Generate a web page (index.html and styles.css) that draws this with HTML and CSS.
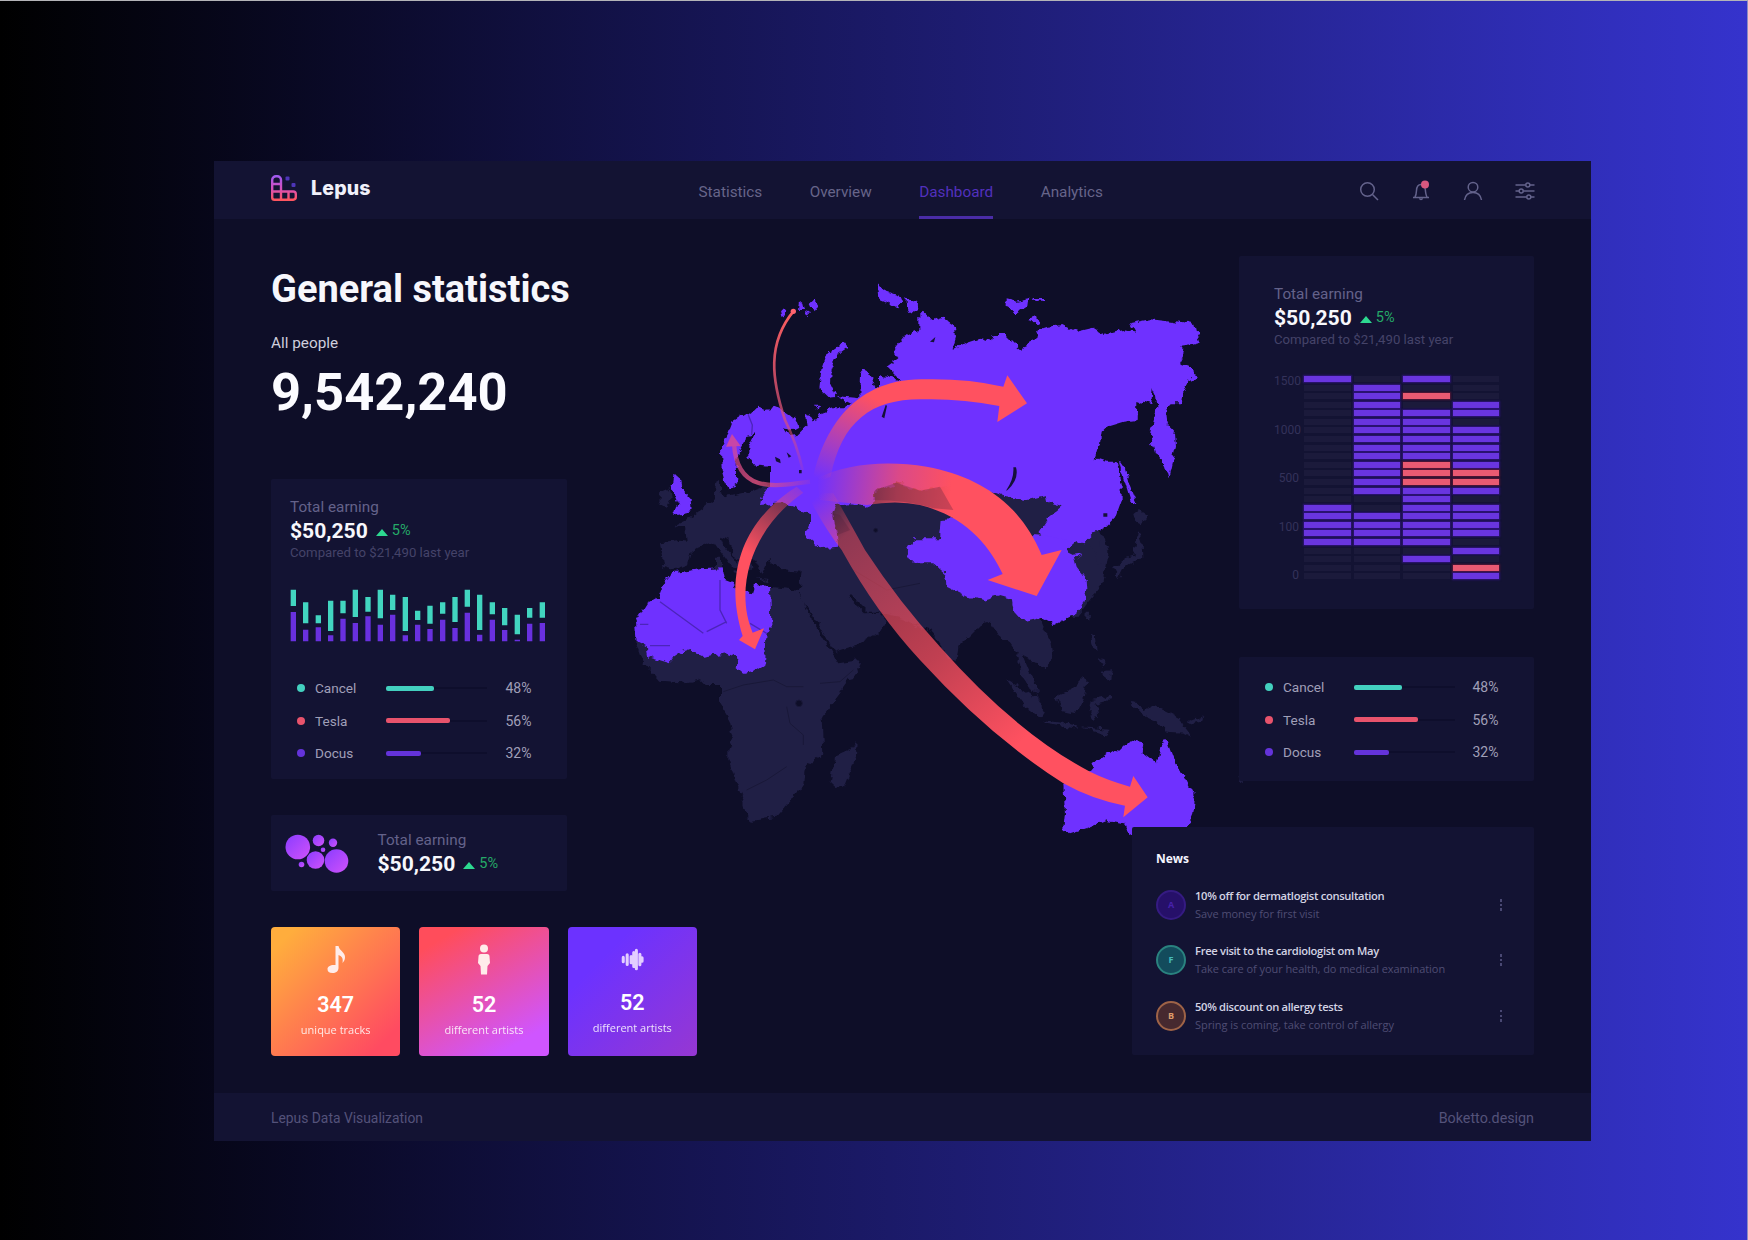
FILE: index.html
```html
<!DOCTYPE html>
<html lang="en">
<head>
<meta charset="utf-8">
<title>Lepus</title>
<link rel="stylesheet" href="styles.css">
</head>
<body>
<div class="window">
  <header class="topbar">
    <div class="brand">
      <svg class="logo" viewBox="0 0 26 26" fill="none">
        <defs><linearGradient id="lg" x1="0" y1="0" x2="0" y2="1"><stop offset="0" stop-color="#a05af0"/><stop offset=".5" stop-color="#d450c0"/><stop offset="1" stop-color="#ff5560"/></linearGradient></defs>
        <path stroke="url(#lg)" stroke-width="2.400" d="M1.2 22.500V5a3.800 3.800 0 0 1 3.800-3.800h1.200A3.800 3.800 0 0 1 10 5v11.500h12.200a2.600 2.600 0 0 1 2.600 2.600v3a2.600 2.600 0 0 1-2.600 2.600H3.500a2.300 2.300 0 0 1-2.300-2.300zM1.200 9H10M1.200 16.500H10v8M17.500 16.500v8"/>
        <rect x="14.500" y="1.500" width="4" height="4" rx="1" fill="#4d35b8"/><rect x="20.500" y="8" width="4" height="4" rx="1" fill="#4d35b8"/>
      </svg>
      <span class="brand-name">Lepus</span>
    </div>
    <nav class="nav"><a>Statistics</a><a>Overview</a><a class="active">Dashboard</a><a>Analytics</a></nav>
    <div class="tools">
      <svg viewBox="0 0 20 20"><circle cx="8.500" cy="8.500" r="6.800"/><path d="M13.500 13.500l5.500 5.500"/></svg>
      <svg viewBox="0 0 20 20"><path d="M2 16.500h16M4 16c1-1.500 1.300-3 1.500-6.500C5.700 5.500 7.500 3.500 10 3.500c1.500 0 3.800 1.500 4.300 5 .3 3.500.7 6 1.700 7.500M8.500 17.500a1.700 1.700 0 0 0 3 0"/><circle class="alert" cx="14" cy="3.500" r="4"/></svg>
      <svg viewBox="0 0 20 20"><circle cx="10" cy="6.200" r="4.800"/><path d="M1.500 19c.8-4.800 3.500-7.500 8.500-7.500s7.700 2.700 8.500 7.500"/></svg>
      <svg viewBox="0 0 20 20"><path d="M.5 4h10M15 4h4.500M.5 10H4M8.500 10h11M.5 16h11M16 16h3.500"/><circle cx="12.800" cy="4" r="2"/><circle cx="6.200" cy="10" r="2"/><circle cx="13.800" cy="16" r="2"/></svg>
    </div>
  </header>

  <main class="main">
    <svg class="map" viewBox="214 219 1377 874">
      <defs>
        <filter id="coast" x="-5%" y="-5%" width="110%" height="110%" color-interpolation-filters="sRGB"><feTurbulence type="fractalNoise" baseFrequency=".045" numOctaves="2" seed="4"/><feDisplacementMap in="SourceGraphic" scale="24" xChannelSelector="R" yChannelSelector="G"/></filter>
        <linearGradient id="g4" gradientUnits="userSpaceOnUse" x1="600" y1="630" x2="730" y2="370"><stop offset="0" stop-color="#ff5160" stop-opacity="0"/><stop offset="1" stop-color="#ff5160"/></linearGradient>
        <linearGradient id="g5" gradientUnits="userSpaceOnUse" x1="590" y1="650" x2="990" y2="690"><stop offset="0" stop-color="#ff5160" stop-opacity="0"/><stop offset=".6" stop-color="#ff5160" stop-opacity=".75"/><stop offset="1" stop-color="#ff5160"/></linearGradient>
        <linearGradient id="g6" gradientUnits="userSpaceOnUse" x1="590" y1="680" x2="1400" y2="1560"><stop offset="0" stop-color="#ff5160" stop-opacity="0"/><stop offset=".12" stop-color="#ff5160" stop-opacity=".5"/><stop offset=".5" stop-color="#ff5160" stop-opacity=".74"/><stop offset=".8" stop-color="#ff5160"/></linearGradient>
        <linearGradient id="g3" gradientUnits="userSpaceOnUse" x1="560" y1="640" x2="400" y2="860"><stop offset="0" stop-color="#ff5160" stop-opacity=".1"/><stop offset="1" stop-color="#ff5160"/></linearGradient>
        <linearGradient id="g2" gradientUnits="userSpaceOnUse" x1="570" y1="630" x2="330" y2="500"><stop offset="0" stop-color="#ff5160" stop-opacity=".1"/><stop offset=".5" stop-color="#e55280" stop-opacity=".8"/><stop offset="1" stop-color="#e04a90" stop-opacity=".6"/></linearGradient>
        <linearGradient id="g1" gradientUnits="userSpaceOnUse" x1="500" y1="600" x2="500" y2="120"><stop offset="0" stop-color="#ff5160" stop-opacity=".1"/><stop offset=".3" stop-color="#d85078" stop-opacity=".7"/><stop offset="1" stop-color="#ff6060"/></linearGradient>
      </defs>
      <g transform="translate(620 270) scale(.33333)">
        <g class="land" filter="url(#coast)">
          <!-- Europe and Asia -->
          <path d="M120 820L180 812 200 815 195 770 165 765 215 740 250 715 280 690 285 640 300 630 300 665 320 680 390 665 430 650 470 640 700 650 900 600 1400 640 1430 750 1465 850 1450 940 1370 1040 1260 1045 1275 1080 1295 1120 1300 1165 1270 1195 1250 1180 1210 1160 1230 1210 1260 1265 1240 1265 1205 1215 1195 1155 1170 1120 1140 1100 1110 1055 1080 1065 1015 1130 1010 1170 985 1165 930 1080 905 1075 860 1050 800 1035 775 1025 740 1025 690 975 685 985 735 1030 780 1028 800 1050 780 1085 720 1120 645 1145 600 1070 550 995 540 950 545 905 480 900 445 860 470 845 480 800 500 770 520 790 560 810 600 840 550 830 480 850 455 860 440 885 425 915 405 870 385 865 400 890 380 905 340 850 325 810 300 800 310 825 350 870 365 895 330 885 280 815 240 830 215 850 205 885 165 900 130 890Z"/>
          <path d="M125 665L150 655 155 680 140 710 118 705ZM285 860h18v35h-18ZM340 900l35 5-15 18ZM405 925l40 5v8Z"/>
          <!-- Africa -->
          <path d="M45 1115L65 1170 120 1235 180 1240 240 1225 260 1245 300 1245 300 1300 325 1340 340 1400 325 1440 325 1470 345 1530 365 1580 380 1645 400 1652 470 1640 515 1590 550 1540 555 1490 610 1450 605 1345 660 1270 715 1195 722 1170 655 1180 635 1150 560 1020 540 960 450 950 300 1000Z"/>
          <path d="M710 1410L708 1460 675 1545 650 1552 632 1535 645 1460 690 1440Z"/>
          <!-- South-east Asia and Oceania -->
          <path d="M1200 1150L1230 1210 1250 1260 1245 1275 1220 1230 1195 1170ZM1262 1300L1250 1275 1235 1240 1215 1230ZM1305 1280L1350 1260 1385 1225 1402 1235 1395 1280 1370 1330 1325 1320ZM1162 1230L1190 1245 1250 1285 1275 1330 1265 1345 1220 1315ZM1270 1350L1370 1366 1370 1376 1280 1362ZM1385 1372L1475 1380 1460 1396ZM1415 1290L1470 1278 1470 1288 1430 1298 1440 1345 1430 1335 1420 1350 1408 1330ZM1525 1295L1555 1300 1570 1320 1600 1305 1670 1340 1717 1402 1690 1388 1640 1385 1615 1355 1560 1330ZM1700 1357L1750 1338 1745 1352 1710 1362ZM1410 1095L1425 1100 1430 1140 1415 1130ZM1435 1160L1460 1175 1450 1190ZM1445 1205L1475 1200 1470 1230 1450 1215ZM1400 1025l10 0-2 30-10-5ZM1850 1517l18 14-4 6Z"/>
          <!-- Korea and Japan -->
          <path d="M1425 790L1445 840 1460 875 1435 885 1425 845 1405 810ZM1560 720L1585 740 1565 760 1545 755 1540 735ZM1555 780L1568 820 1570 860 1510 895 1495 925 1480 895 1510 870 1540 860 1548 820Z"/>
        </g>
        <g class="borders"><path d="M310 1265l60-20 90-15 40 20h50M500 1310l10 50 40 35v30M1110 740l60 40M600 1240l60-5 40-35M380 1560l60-30 60-40M700 900l100 60 100-20"/><circle cx="537" cy="1300" r="10"/><circle cx="767" cy="781" r="6"/></g>
        <g class="hot" filter="url(#coast)">
          <!-- Scandinavia and Russia -->
          <path d="M320 658L305 600 303 530 325 490 340 450 372 430 395 435 415 410 440 420 470 412 500 430 530 450 538 470 520 480 492 475 508 498 535 495 560 470 555 430 570 435 582 455 600 430 640 415 675 415 695 402 650 378 718 385 720 310 728 298 750 310 765 350 780 355 780 315 802 320 842 332 800 290 835 265 820 240 850 200 895 180 895 135 912 125 940 150 970 140 1005 165 1008 205 998 240 1030 220 1075 205 1110 215 1115 195 1155 195 1185 225 1205 242 1215 225 1260 205 1250 180 1280 170 1330 165 1370 185 1420 173 1455 195 1510 180 1545 188 1530 160 1590 148 1690 160 1700 152 1725 158 1732 190 1742 218 1715 225 1680 230 1695 250 1680 280 1710 290 1728 322 1705 335 1690 370 1685 400 1655 400 1635 420 1640 460 1665 490 1668 530 1655 580 1645 625 1635 590 1605 545 1592 500 1600 460 1612 410 1608 375 1598 355 1594 400 1570 392 1552 400 1550 450 1510 455 1460 470 1445 485 1440 520 1427 565 1460 575 1490 575 1505 640 1505 690 1485 745 1460 770 1420 790 1390 820 1360 815 1300 850 1255 790 1285 745 1325 712 1285 700 1280 675 1220 690 1150 680 1110 665 1000 650 900 660 830 640 765 665 765 700 740 710 690 700 650 705 640 735 650 790 655 830 600 835 555 795 570 760 570 730 520 710 490 700 420 705 425 680 450 650 450 590 400 585 385 565 385 530 405 490 385 495 358 540 350 580 352 640Z"/>
          <path d="M858 852L885 805 960 805 965 750 1100 740 1235 795 1300 800 1370 815 1342 840 1350 855 1385 850 1372 870 1388 850 1362 862 1370 890 1400 930 1402 960 1382 1015 1350 1040 1302 1065 1260 1045 1212 1055 1180 1020 1175 985 1140 975 1090 990 1040 980 980 950 975 910 940 880 900 880 870 872Z"/>
          <!-- Arctic islands, Sakhalin, Britain -->
          <path d="M770 40L795 60 840 75 850 100 830 112 800 95 775 85ZM860 85L890 95 895 110 872 132 860 110ZM672 212L686 230 650 255 632 300 630 340 648 378 625 380 598 355 605 295 620 250ZM1160 85L1190 92 1225 85 1222 108 1190 130 1160 112ZM1238 84h35v8h-35ZM1230 145l20-8 6 18-18 2ZM540 90l10 8 5 22-18 0ZM572 105l18-18 6 15-15 22ZM555 128l12 4-8 10ZM480 122l22 0-2 14-16 4ZM1496 573L1515 600 1530 650 1550 700 1532 695 1512 630ZM160 615L182 625 188 660 215 690 218 725 162 737 175 700 155 650ZM585 410l12 0-4 12Z"/>
          <!-- North-west Africa -->
          <path d="M155 910L240 898 308 895 315 930 340 940 352 965 400 970 405 945 450 948 455 1080 440 1090 435 1180 400 1205 370 1212 350 1195 355 1165 320 1150 250 1160 205 1137 170 1150 150 1180 85 1160 80 1130 50 1115 45 1055 80 1000 115 980 130 940Z"/>
          <!-- Australia -->
          <path d="M1330 1545L1410 1500 1430 1475 1475 1440 1495 1445 1530 1410 1570 1420 1565 1445 1610 1480 1620 1440 1638 1406 1665 1480 1700 1530 1725 1580 1720 1630 1700 1680 1560 1680 1528 1695 1515 1660 1460 1650 1410 1670 1350 1690 1330 1675 1335 1630Z"/>
        </g>
        <g class="inland"><path d="M120 995l130 95M300 930v90l20 40M90 1127h60M60 1063h25M260 1085l60-30M385 435l12 30-2 30M440 1090l-50-30"/></g>
        <g class="lakes"><path d="M1188 592q10 35-25 68l-5 2q25-35 22-70ZM465 560l15 8 2 12-14-6ZM500 547l14 12-8 4ZM930 215l16-14-4 16ZM785 440l12-35 4 2-8 38ZM1450 730h12v10h-12ZM537 600h8v10h-8Z"/></g>
        <!-- Flow arrows -->
        <g class="flows">
          <path fill="none" stroke="url(#g1)" stroke-width="8" d="M548 600Q530 520 495 450C455 330 440 220 522 122"/>
          <circle cx="520" cy="124" r="8" fill="#ff6470"/>
          <path fill="none" stroke="url(#g2)" stroke-width="13" d="M570 635C460 650 350 670 342 520"/>
          <path fill="#c845a8" d="M318 530L336 492 362 528Z"/>
          <path fill="url(#g3)" d="M530 650C400 730 300 880 368 1098L357 1110 405 1138 432 1075 398 1088C340 950 400 770 550 668Z"/>
          <path fill="url(#g4)" d="M575 645C600 500 690 325 910 328Q1040 325 1150 350L1162 316 1221 400 1132 456 1138 408Q1020 385 910 388C760 385 665 450 632 620Z"/>
          <path fill="url(#g5)" d="M590 625C680 580 800 570 920 590C1080 620 1200 700 1265 855L1325 840 1250 978 1103 930 1148 912C1110 830 1040 740 900 705Q830 690 740 705L600 690Z"/>
          <path class="shade" d="M760 690L765 660 830 638 900 662 960 650 1000 720 940 715Q860 690 760 690Z"/>
          <path fill="url(#g6)" d="M560 670Q610 770 665 840Q770 1030 900 1170Q1110 1400 1330 1540Q1420 1590 1515 1607L1510 1642 1583 1582 1540 1518 1530 1550Q1460 1530 1410 1505Q1190 1390 960 1130Q840 1000 735 840Q680 740 640 670Z"/>
          <path class="shade" d="M638 730L660 735 690 780 652 795Z"/>
        </g>
      </g>
    </svg>

    <section class="left">
      <h1>General statistics</h1>
      <p class="caption">All people</p>
      <p class="total">9,542,240</p>
      <div class="card earnings">
        <div class="stat"><p class="label">Total earning</p><p class="value">$50,250 <i></i><em>5%</em></p><p class="note">Compared to $21,490 last year</p></div>
        <svg class="bars" viewBox="88 350 768 168"><path class="up" d="M98 358V407M135 396V459M173 435V459M210 391V482M247 391V429M284 358V440M322 380V424M359 358V444M396 373V419M434 380V482M471 421V449M508 406V460M546 396V430M583 380V455M620 358V409M657 373V479M695 396V432M732 413V465M770 433V492M807 413V442M845 396V442"/><path class="down" d="M98 425V513M135 478V513M173 471V513M210 495V513M247 445V513M284 458V513M322 438V513M359 463V513M396 433V513M434 495V513M471 463V513M508 476V513M546 448V513M583 473V513M620 427V513M657 493V513M695 448V513M732 479V513M770 508V513M807 460V513M845 458V513"/></svg>
        <ul class="legend"><li class="teal"><b></b><span>Cancel</span><div><u style="width:48px"></u></div><small>48%</small></li><li class="red"><b></b><span>Tesla</span><div><u style="width:64px"></u></div><small>56%</small></li><li class="violet"><b></b><span>Docus</span><div><u style="width:35px"></u></div><small>32%</small></li></ul>
      </div>
      <div class="card bubbles">
        <svg viewBox="0 0 64 42"><defs><linearGradient id="bg" x1="0" y1="0" x2="1" y2="1"><stop offset="0" stop-color="#8a3cff"/><stop offset="1" stop-color="#d052fa"/></linearGradient></defs><g fill="url(#bg)"><circle cx="12.800" cy="14" r="12.300"/><circle cx="33.500" cy="7.500" r="5.800"/><circle cx="48" cy="9.800" r="4.200"/><circle cx="38" cy="16.800" r="2.300"/><circle cx="30.500" cy="27" r="8.800"/><circle cx="51.500" cy="28" r="11.800"/><circle cx="16.500" cy="31.500" r="2.800"/></g></svg>
        <div class="stat"><p class="label">Total earning</p><p class="value">$50,250 <i></i><em>5%</em></p></div>
      </div>
      <div class="tiles">
        <div class="tile orange"><svg viewBox="0 0 32 32"><path d="M15.500 2h3c1 5 6.500 6 6.500 11 0 3-1 4.500-2.500 6 1-5-1-7-4-8v13c0 3-2.500 5-6 5s-5-1.500-5-4 3-4.500 8-4z"/></svg><strong>347</strong><span>unique tracks</span></div>
        <div class="tile pink"><svg viewBox="0 0 32 32"><circle cx="16" cy="4.500" r="4"/><path d="M13 10h6q2.500 0 2.500 2.500L22 19l-2.500 3-.5 8.500h-6L12.500 22 10 19l.5-6.500Q10.500 10 13 10z"/></svg><strong>52</strong><span>different artists</span></div>
        <div class="tile purple"><svg viewBox="0 0 32 32"><path d="M6 13v5M10.500 10v11M15 12v7M18 7.500v16M21 5v21M25 9.500v12M27.500 13.500v4"/></svg><strong>52</strong><span>different artists</span></div>
      </div>
    </section>

    <section class="right">
      <div class="card grid-card">
        <div class="stat"><p class="label">Total earning</p><p class="value">$50,250 <i></i><em>5%</em></p><p class="note">Compared to $21,490 last year</p></div>
        <div class="heat"><div class="axis"><span>1500</span><span>1000</span><span>500</span><span>100</span><span>0</span></div><div class="cells" id="cells"></div></div>
      </div>
      <div class="card legend-card">
        <ul class="legend"><li class="teal"><b></b><span>Cancel</span><div><u style="width:48px"></u></div><small>48%</small></li><li class="red"><b></b><span>Tesla</span><div><u style="width:64px"></u></div><small>56%</small></li><li class="violet"><b></b><span>Docus</span><div><u style="width:35px"></u></div><small>32%</small></li></ul>
      </div>
      <div class="card news">
        <h2>News</h2>
        <article><b class="av a">A</b><div><h3>10% off for dermatlogist consultation</h3><p>Save money for first visit</p></div><i class="dots"></i></article>
        <article><b class="av f">F</b><div><h3>Free visit to the cardiologist om May</h3><p>Take care of your health, do medical examination</p></div><i class="dots"></i></article>
        <article><b class="av d">B</b><div><h3>50% discount on allergy tests</h3><p>Spring is coming, take control of allergy</p></div><i class="dots"></i></article>
      </div>
    </section>
  </main>
  <footer class="footer"><span>Lepus Data Visualization</span><span class="credit">Boketto.design</span></footer>
</div>
<script src="cells.js"></script>
</body>
</html>
```
FILE: styles.css
```css
* { box-sizing: border-box; margin: 0; padding: 0; }
body { width: 1748px; height: 1240px; overflow: hidden; padding: 160px 0 0 214px; border-top: 1px solid #b4b4b8; border-right: 1px solid #8c8cc0; background: linear-gradient(90deg, #000, #3533cd); font-family: Roboto, "Liberation Sans", sans-serif; }
.window { width: 1377px; height: 980px; display: flex; flex-direction: column; background: #0e0e28; }
.topbar { height: 58px; flex: none; position: relative; z-index: 1; display: grid; grid-template-columns: 427.500px 1fr auto; padding: 0 56.500px 0 57px; background: #131333; }
.brand { display: flex; padding-top: 14px; }
.logo { width: 26px; height: 26px; }
.brand-name { margin-left: 14px; font: 800 19.500px/26px Inter, sans-serif; color: #f0f0fa; letter-spacing: .2px; }
.nav { display: flex; gap: 47.500px; height: 58px; }
.nav a { padding-top: 21px; font-size: 15.300px; line-height: 20px; color: #67658a; border-bottom: 3px solid transparent; }
.nav .active { color: #5230bd; border-color: #4a2ca6; }
.tools { display: flex; gap: 32px; padding-top: 20px; }
.tools svg { width: 20px; height: 20px; fill: none; stroke: #64638c; stroke-width: 1.500; overflow: visible; }
.tools .alert { fill: #d7587f; stroke: none; }
.main { position: relative; flex: 1; display: flex; justify-content: space-between; padding: 37px 57px 0; }
.map { position: absolute; inset: 0; width: 100%; height: 100%; }
.land { fill: #201f45; }
.borders { fill: #0e0e28; stroke: #191838; stroke-width: 3; }
.borders path { fill: none; }
.hot { fill: #6f31ff; }
.inland { fill: none; stroke: #4c25ba; stroke-width: 4; }
.lakes { fill: #15103a; }
.shade { fill: #50203c; opacity: .3; }
.left, .right { position: relative; }
.left { width: 426px; }
h1 { margin-top: 13px; font-size: 38px; line-height: 40px; font-weight: 700; color: #f7f7fc; white-space: nowrap; }
.caption { margin-top: 24px; font-size: 15.300px; line-height: 20px; color: #cfcfdd; }
.total { margin-top: 9px; font-size: 52.500px; line-height: 60px; font-weight: 700; color: #fbfbff; }
.card { background: #131333; border-radius: 2px; }
.earnings { width: 296px; height: 300px; margin-top: 57px; padding: 18px 19px 0; }
.label { font-size: 15.300px; line-height: 20px; color: #64628a; }
.value { display: flex; align-items: center; padding-top: 1px; font-size: 21.100px; line-height: 26px; font-weight: 700; color: #f7f7fc; }
.value i { margin: 3px 4px 0 8px; border: 6px solid transparent; border-top: 0; border-bottom: 7px solid #2dd890; }
.value em { font-size: 14.500px; font-style: normal; font-weight: 400; color: #25a968; }
.note { font-size: 13.200px; line-height: 18px; color: #454369; white-space: nowrap; }
.bars { display: block; width: 256px; height: 56px; margin-top: 25px; fill: none; stroke-width: 16; }
.up { stroke: #42d5c0; }
.down { stroke: #6930df; }
.legend { list-style: none; padding-top: 29px; }
.legend li { display: grid; grid-template-columns: 18px 71px 101px 1fr; align-items: center; height: 32.600px; padding: 0 16.500px 0 7px; color: #a09fb8; font-size: 13.600px; }
.legend b { width: 8px; height: 8px; border-radius: 50%; background: var(--c); }
.legend div { height: 2px; background: #0e0e2c; display: flex; align-items: center; }
.legend u { height: 5px; flex: none; border-radius: 2px; background: var(--c); }
.legend small { font-size: 14px; text-align: right; }
.teal { --c: #43d0bf; }
.red { --c: #e8536c; }
.violet { --c: #6433da; }
.bubbles { display: flex; width: 296px; height: 76px; margin-top: 36px; padding: 18px 14px; }
.bubbles svg { width: 64px; height: 42px; margin-right: 28.500px; }
.bubbles .stat { margin-top: -3px; }
.tiles { display: flex; gap: 19px; margin-top: 36px; }
.tile { width: 129.500px; height: 129px; padding-top: 17px; display: flex; flex-direction: column; align-items: center; border-radius: 4px; color: #fff; }
.tile svg { width: 32px; height: 32px; fill: #ffecea; }
.tile strong { margin-top: 16px; font-size: 21.500px; line-height: 26px; font-weight: 600; }
.tile span { margin-top: 3px; font: 400 11px/18px "Open Sans", sans-serif; opacity: .85; }
.orange { background: linear-gradient(135deg, #ffad3d 10%, #ff4b61 88%); }
.pink { background: linear-gradient(150deg, #ff4d5b 12%, #cf55ff 85%); }
.purple { background: linear-gradient(135deg, #6c32ff 25%, #9637d2); }
.purple svg { width: 28px; fill: none; stroke: #e3ceff; stroke-width: 3.500px; stroke-linecap: round; }
.purple strong { margin-top: 14px; }
.right { display: flex; flex-direction: column; align-items: flex-end; width: 402px; }
.grid-card { width: 295px; height: 353px; padding: 28px 35px 0; }
.heat { display: flex; margin-top: 27px; }
.axis { width: 25px; margin-right: 5px; margin-top: -5px; display: flex; flex-direction: column; gap: 28.600px; font-size: 12px; line-height: 20px; text-align: right; color: #34325a; }
.cells { width: 195px; display: grid; grid-template-columns: repeat(4, 1fr); align-content: start; gap: 2.580px 3px; }
.cells i { height: 6px; background: #1b1a3b; }
.cells .p { background: #6935df; box-shadow: 0 0 2px 1px #4014a5a0; }
.cells .r { background: #e95a72; box-shadow: 0 0 2px 1px #851937a0; }
.legend-card { width: 295px; height: 124px; margin-top: 48px; padding: 0 19px; }
.legend-card .legend { padding-top: 14px; }
.news { width: 402px; height: 228px; margin-top: 46px; padding: 24px 24px 0; font-family: "Open Sans", sans-serif; }
.news h2 { font-size: 12px; line-height: 16px; color: #f5f5ff; }
.news article { display: grid; grid-template-columns: 39px 1fr 10px; align-items: center; height: 55.600px; }
.news h2 + article { margin-top: 10px; }
.av { width: 30px; height: 30px; border: 2px solid; border-radius: 50%; font-size: 9px; line-height: 26px; text-align: center; }
.a { color: #4721ac; background: #261069; border-color: #351b82; }
.f { color: #46bcba; background: #134b5c; border-color: #2a827f; }
.d { color: #dd9b6a; background: #46292f; border-color: #9e6347; }
.news h3 { font-size: 11.200px; line-height: 18px; font-weight: 600; color: #d4d4e4; white-space: nowrap; letter-spacing: -.32px; }
.news p { font-size: 11px; line-height: 18px; color: #4f4d74; white-space: nowrap; letter-spacing: -.05px; }
.dots { width: 2px; height: 12px; background: repeating-linear-gradient(#494873 0 2.500px, transparent 2.500px 4.700px); }
.footer { height: 48px; flex: none; position: relative; display: flex; justify-content: space-between; align-items: center; padding: 1px 57px 0; background: #131333; color: #54527a; font-size: 13.850px; }
.credit { font-size: 14.300px; }
```
FILE: cells.js
```js
// One string per column, top to bottom: p = purple, r = red, . = empty
const columns = [
  "p..............ppppp....",
  ".ppppppppppppp..pppp....",
  "p.r.pppppprrrppppppp.p..",
  "...pp.ppppprrp.pppp.p.rp"
];
const cells = document.getElementById("cells");
for (let row = 0; row < 24; row++) {
  for (const column of columns) {
    const cell = document.createElement("i");
    if (column[row] !== ".") cell.className = column[row];
    cells.append(cell);
  }
}
```
